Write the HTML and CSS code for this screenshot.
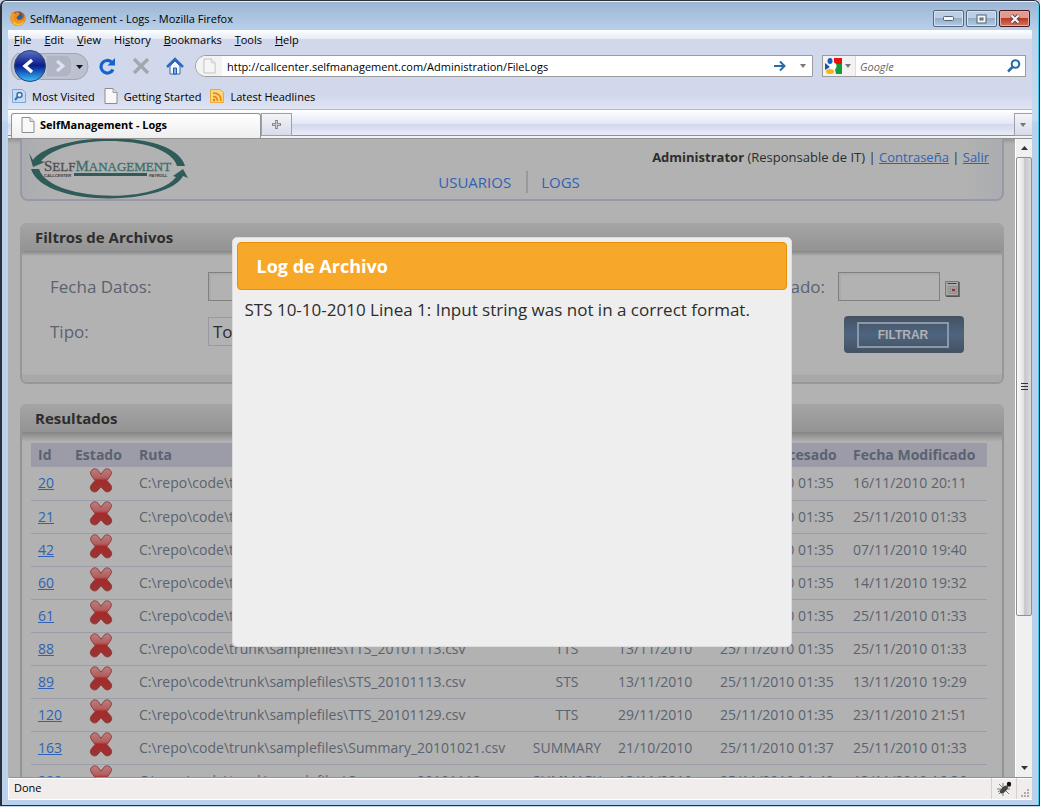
FILE: index.html
```html
<!DOCTYPE html>
<html lang="es">
<head>
<meta charset="utf-8">
<title>SelfManagement - Logs</title>
<link rel="stylesheet" href="styles.css">
</head>
<body>
<svg class="defs" aria-hidden="true">
  <defs>
    <linearGradient id="red" x1="0" y1="0" x2="0" y2="1"><stop offset="0" stop-color="#b98080"/><stop offset=".4" stop-color="#b45c5c"/><stop offset=".5" stop-color="#a62a2a"/><stop offset="1" stop-color="#983535"/></linearGradient>
    <linearGradient id="orb" x1="0" y1="0" x2="0" y2="1"><stop offset="0" stop-color="#5b71c4"/><stop offset=".48" stop-color="#0c1d87"/><stop offset=".55" stop-color="#0b2fa0"/><stop offset="1" stop-color="#38c4ff"/></linearGradient>
    <symbol id="cross" viewBox="0 0 24 26"><path d="M2.500 2.200C5-.2 8 .8 9.500 3.200L12 6.500l2.500-3.300C16 .8 19-.2 21.500 2.200c2 2 1.500 4.300 0 6.300L18.200 13l3.800 4.500c1.600 2 1.500 4.500-.3 6.200-2.300 2-5.200 1.300-6.900-.9L12 19.500l-2.800 3.300c-1.700 2.200-4.600 2.900-6.900.9-1.800-1.700-1.900-4.200-.3-6.200L5.800 13 2.500 8.500C1 6.500.5 4.200 2.500 2.200z" fill="url(#red)" stroke="#8f3b3b"/></symbol>
    <symbol id="page" viewBox="0 0 14 16"><path d="M1 .5h8l4 4v11H1z" fill="#f8f8f8" stroke="#8c8c8c"/><path d="M9 .5v4h4" fill="#ddd" stroke="#a0a0a0"/></symbol>
  </defs>
</svg>
<div class="window">
  <header class="titlebar">
    <svg class="firefox" width="16" height="17" viewBox="0 0 16 17"><circle cx="8" cy="8.500" r="7.500" fill="#d95a10"/><circle cx="8" cy="7" r="5" fill="#27629e"/><path d="M7 2c3 0 3 3 1 4s-2 3 1 4c2 0 3-1 4-3 0 5-3 7-6 6-3-.5-5-3-4-7z" fill="#ef8a1d"/><path d="M1 4c0-2 2-3 2-3v2l3 1-2 2c-1 4 3 7 8 5 2-1 2-4 2-6 2 4 1 9-4 10.500S0 13 .5 8z" fill="#f19a24"/><path d="M3 11c3 4 8 4 11 0-1 4-4 5-7 4.500S3 13 3 11z" fill="#f9c83c"/></svg>
    <span class="window-title">SelfManagement - Logs - Mozilla Firefox</span>
    <div class="controls">
      <button class="control" aria-label="Minimize"><svg width="11" height="6"><rect x=".5" y=".5" width="10" height="4" rx="1" fill="#f5f5f5" stroke="#53606f"/></svg></button>
      <button class="control" aria-label="Maximize"><svg width="11" height="10"><rect x="1" y="1" width="9" height="8" fill="#f5f5f5" stroke="#53606f"/><rect x="4" y="4" width="3" height="2" fill="#9fb4cb" stroke="#53606f"/></svg></button>
      <button class="control close" aria-label="Close"><svg width="12" height="10" viewBox="0 0 12 10"><path d="M2.500 1.500l7 7m0-7l-7 7" stroke="#5c4148" stroke-width="4"/><path d="M2.500 1.500l7 7m0-7l-7 7" stroke="#f5f5f5" stroke-width="2.200"/></svg></button>
    </div>
  </header>
  <div class="client">
    <div class="chrome">
      <nav class="menu" aria-label="Menu">
        <button><u>F</u>ile</button><button><u>E</u>dit</button><button><u>V</u>iew</button><button>Hi<u>s</u>tory</button><button><u>B</u>ookmarks</button><button><u>T</u>ools</button><button><u>H</u>elp</button>
      </nav>
      <div class="toolbar">
        <svg class="history" width="80" height="34" viewBox="0 0 80 34"><path d="M8 4.500h57a12 12 0 0 1 0 26H8C-1 26-1 8 8 4.500z" fill="#bcc1cf" stroke="#a0a4b3"/><path d="M36 6h19a7 7 0 0 1 7 7v8a7 7 0 0 1-7 7H36z" fill="#afb5c4" stroke="#c5cad6"/><path d="M47 12l6 5-6 5" fill="none" stroke="#dfe3ef" stroke-width="3"/><circle cx="20" cy="17" r="15.500" fill="url(#orb)" stroke="#2a4275"/><path d="M22 11l-7 6 7 6" fill="none" stroke="#fff" stroke-width="3.500"/><path d="M66 16h7l-3.500 4z" fill="#111"/></svg>
        <button class="tool" aria-label="Reload"><svg width="18" height="18" viewBox="0 0 18 18"><path d="M13.500 5A6.300 6.300 0 1 0 15 12.500" fill="none" stroke="#1762d0" stroke-width="3.200"/><path d="M17 1v7.500H9.500z" fill="#1762d0"/></svg></button>
        <button class="tool" aria-label="Stop"><svg width="18" height="18" viewBox="0 0 18 18"><path d="M2 2l14 14M16 2L2 16" stroke="#a5a7af" stroke-width="3.500"/></svg></button>
        <button class="tool" aria-label="Home"><svg width="18" height="18" viewBox="0 0 18 18"><path d="M4 9v8h10V9L9 4z" fill="#f4f8fd" stroke="#3566b4"/><path d="M1 10l8-8 8 8" fill="none" stroke="#2e69c4" stroke-width="2.500"/><path d="M7.500 11h3v6h-3z" fill="#76aef0" stroke="#245ba8"/></svg></button>
        <div class="url">
          <span class="favicon"><svg width="13" height="16" opacity=".5"><use href="#page"/></svg></span>
          <input type="text" aria-label="Address" value="http://callcenter.selfmanagement.com/Administration/FileLogs">
          <svg width="12" height="12" viewBox="0 0 12 12"><path d="M0 6h10M6 1.500L10.500 6 6 10.500" fill="none" stroke="#286ba8" stroke-width="2"/></svg>
          <svg width="7" height="4"><path d="M0 0h6L3 4z" fill="#777"/></svg>
        </div>
        <div class="search">
          <span class="engine"><svg width="17" height="16" viewBox="0 0 17 16"><path d="M9 0h8v6H9z" fill="#e8110d"/><path d="M9 6h8v10h-6z" fill="#139b3c"/><path d="M0 5l5 4-5 3z" fill="#1753ad"/><circle cx="8" cy="8" r="3.500" fill="#fff"/><ellipse cx="5" cy="3" rx="2.500" ry="3" fill="#1560bd"/><ellipse cx="5" cy="13.500" rx="4" ry="2.500" fill="#f6b417"/></svg><svg width="7" height="4"><path d="M0 0h6L3 4z" fill="#777"/></svg></span>
          <input type="text" aria-label="Search" placeholder="Google">
          <svg width="14" height="14" viewBox="0 0 14 14"><circle cx="8.500" cy="5" r="3.800" fill="#fff" stroke="#286ba8" stroke-width="2"/><path d="M5.500 8L1 12.500" stroke="#286ba8" stroke-width="2.500"/></svg>
        </div>
      </div>
      <div class="bookmarks">
        <a href="#"><svg width="14" height="16" viewBox="0 0 14 16"><path d="M.5 1.500h10l3 3v10H.5z" fill="#c4dcf5" stroke="#7ca8d7"/><circle cx="7.500" cy="7" r="2.500" fill="#e8f3fd" stroke="#3d6eae" stroke-width="1.500"/><path d="M5.500 9L3 12" stroke="#3d6eae" stroke-width="2"/></svg>Most Visited</a>
        <a href="#"><svg width="14" height="16"><use href="#page"/></svg>Getting Started</a>
        <a href="#"><svg width="14" height="16" viewBox="0 0 14 16"><path d="M.5 1.500h10l3 3v10H.5z" fill="#fbd77c" stroke="#e9a93b"/><path d="M3 5c5 0 8 3 8 8M3 8.500c3 0 4.500 1.500 4.500 4.500" fill="none" stroke="#e8820f" stroke-width="1.700"/><circle cx="4" cy="12" r="1.300" fill="#e8820f"/></svg>Latest Headlines</a>
      </div>
    </div>
    <div class="tabs">
      <button class="tab"><svg width="14" height="16"><use href="#page"/></svg>SelfManagement - Logs</button>
      <button class="new-tab" aria-label="New tab"><svg width="9" height="9"><path d="M4.500 0v9M0 4.500h9" stroke="#777" stroke-width="2.500"/><path d="M4.500 1v7M1 4.500h7" stroke="#ccc"/></svg></button>
      <button class="all-tabs" aria-label="All tabs"><svg width="7" height="4"><path d="M0 0h6L3 4z" fill="#777"/></svg></button>
    </div>
    <div class="view">
      <div class="page">
        <div class="site-head">
          <svg class="logo" width="160" height="60" viewBox="0 0 160 60">
            <path d="M4 21C22-6 145-12 156 27h-8C140-4 37-7 12 22l4 1-12 5-4-14z" fill="#2f5b59"/>
            <path d="M154 37C140 66 15 70 2 30h8C20 62 126 66 147 38l-3-1 10-7 5 9z" fill="#2f5b59"/>
            <text x="15" y="32" class="logo-name"><tspan class="logo-self">S<tspan class="cap">ELF</tspan></tspan>M<tspan class="cap">ANAGEMENT</tspan></text>
            <text x="15" y="38" class="logo-sub">CALLCENTER</text><path d="M45 34h73v3H45z" fill="#2f5b59"/><text x="120" y="38" class="logo-sub">PAYROLL</text>
          </svg>
          <nav class="site-nav" aria-label="Principal"><a href="#">USUARIOS</a><a href="#">LOGS</a></nav>
          <p class="user"><b>Administrator</b> (Responsable de IT) | <a href="#">Contraseña</a> | <a href="#">Salir</a></p>
        </div>
        <section class="panel">
          <h2>Filtros de Archivos</h2>
          <form class="filters">
            <label for="datos">Fecha Datos:</label><input id="datos" type="text">
            <label class="right-label" for="procesado">Fecha Procesado:</label>
            <div class="date"><input id="procesado" type="text"><svg width="15" height="16" viewBox="0 0 15 16"><path d="M.5.5h13v14H.5z" fill="#aaa" stroke="#777"/><path d="M14 1v14.500H1" fill="none" stroke="#555" stroke-width="1.500"/><path d="M2.500 2.500h9" stroke="#444"/><path d="M3 5.500h9v7H3zM3 8h9M3 10.500h9M5.500 5v8M8 5v8M10 5v8" fill="none" stroke="#8a8a8a" stroke-width=".7"/><path d="M7 8h3v2H7z" fill="#9c3030"/></svg></div>
            <label for="tipo">Tipo:</label><select id="tipo"><option>Todos</option></select>
            <button class="filter-button" type="button"><span>FILTRAR</span></button>
          </form>
        </section>
        <section class="panel results">
          <h2>Resultados</h2>
          <table>
            <colgroup><col class="c-id"><col class="c-state"><col><col class="c-type"><col class="c-date"><col class="c-proc"><col class="c-mod"></colgroup>
            <thead><tr><th>Id</th><th>Estado</th><th>Ruta</th><th>Tipo</th><th>Fecha</th><th>Fecha Procesado</th><th>Fecha Modificado</th></tr></thead>
            <tbody>
              <tr><td><a href="#">20</a></td><td><svg><use href="#cross"/></svg></td><td>C:\repo\code\trunk</td><td></td><td></td><td>25/11/2010 01:35</td><td>16/11/2010 20:11</td></tr>
              <tr><td><a href="#">21</a></td><td><svg><use href="#cross"/></svg></td><td>C:\repo\code\trunk</td><td></td><td></td><td>25/11/2010 01:35</td><td>25/11/2010 01:33</td></tr>
              <tr><td><a href="#">42</a></td><td><svg><use href="#cross"/></svg></td><td>C:\repo\code\trunk</td><td></td><td></td><td>25/11/2010 01:35</td><td>07/11/2010 19:40</td></tr>
              <tr><td><a href="#">60</a></td><td><svg><use href="#cross"/></svg></td><td>C:\repo\code\trunk</td><td></td><td></td><td>25/11/2010 01:35</td><td>14/11/2010 19:32</td></tr>
              <tr><td><a href="#">61</a></td><td><svg><use href="#cross"/></svg></td><td>C:\repo\code\trunk</td><td></td><td></td><td>25/11/2010 01:35</td><td>25/11/2010 01:33</td></tr>
              <tr><td><a href="#">88</a></td><td><svg><use href="#cross"/></svg></td><td>C:\repo\code\trunk\samplefiles\TTS_20101113.csv</td><td>TTS</td><td>13/11/2010</td><td>25/11/2010 01:35</td><td>25/11/2010 01:33</td></tr>
              <tr><td><a href="#">89</a></td><td><svg><use href="#cross"/></svg></td><td>C:\repo\code\trunk\samplefiles\STS_20101113.csv</td><td>STS</td><td>13/11/2010</td><td>25/11/2010 01:35</td><td>13/11/2010 19:29</td></tr>
              <tr><td><a href="#">120</a></td><td><svg><use href="#cross"/></svg></td><td>C:\repo\code\trunk\samplefiles\TTS_20101129.csv</td><td>TTS</td><td>29/11/2010</td><td>25/11/2010 01:35</td><td>23/11/2010 21:51</td></tr>
              <tr><td><a href="#">163</a></td><td><svg><use href="#cross"/></svg></td><td>C:\repo\code\trunk\samplefiles\Summary_20101021.csv</td><td>SUMMARY</td><td>21/10/2010</td><td>25/11/2010 01:37</td><td>25/11/2010 01:33</td></tr>
              <tr><td><a href="#">200</a></td><td><svg><use href="#cross"/></svg></td><td>C:\repo\code\trunk\samplefiles\Summary_20101113.csv</td><td>SUMMARY</td><td>13/11/2010</td><td>25/11/2010 01:40</td><td>13/11/2010 16:36</td></tr>
            </tbody>
          </table>
        </section>
        <div class="overlay">
          <div class="dialog" role="dialog" aria-labelledby="dialog-title">
            <h2 id="dialog-title">Log de Archivo</h2>
            <p>STS 10-10-2010 Linea 1: Input string was not in a correct format.</p>
          </div>
        </div>
      </div>
      <div class="scrollbar">
        <svg class="arrow" width="7" height="4"><path d="M0 4h7L3.500 0z" fill="#333"/></svg>
        <div class="thumb"><i></i><i></i><i></i></div>
        <div class="track"></div>
        <svg class="arrow" width="7" height="4"><path d="M0 0h7L3.500 4z" fill="#333"/></svg>
      </div>
    </div>
    <footer class="status">
      <span class="done">Done</span>
      <span class="bug"><svg width="16" height="16" viewBox="0 0 16 16"><path d="M3 3l10 10M1 8h13M7 2v13M3 13L13 3M2 11l3-2M11 6l4-1" stroke="#777"/><ellipse cx="8" cy="8.500" rx="2.300" ry="5" transform="rotate(45 8 8.500)" fill="#444"/><circle cx="13" cy="3" r="2.200" fill="#111"/></svg></span>
      <span class="grip"><svg width="9" height="9"><path d="M7 1h2M4 4h2M7 4h2M1 7h2M4 7h2M7 7h2" stroke="#b0aaa8" stroke-width="2"/></svg></span>
    </footer>
  </div>
</div>
</body>
</html>
```

FILE: styles.css
```css
* { box-sizing: border-box; }
body { margin: 0; background: #c5d5e8; font-family: "Open Sans", "Noto Sans", sans-serif; }
button, input, select { font: inherit; color: inherit; margin: 0; }
button { padding: 0; border: 0; background: none; }
svg { display: block; flex: none; }
.defs { position: absolute; width: 0; height: 0; }

.window {
  display: flex; flex-direction: column; height: calc(100vh - 1px);
  padding: 0 7px 0 6px; background: linear-gradient(#9ab4d3, #b9d1ea 30px, #c8dcf1 118px, #b9d1ea 122px);
  border: solid #2c2f39; border-width: 1px 1px 1px 2px; border-radius: 6px 6px 0 0;
  box-shadow: inset 0 1px #e9f2fb, inset -1px 0 #45c9ee; font-size: 11px; color: #000;
}
.titlebar { display: flex; align-items: center; height: 29px; padding: 6px 2px 0; gap: 4px; flex: none; }
.window-title { flex: 1; font-size: 11px; }
.controls { display: flex; gap: 2px; }
.control {
  display: flex; align-items: center; justify-content: center; width: 31px; height: 17px;
  border: 1px solid #56667d; border-radius: 2px; box-shadow: inset 0 0 0 1px #d5e2f0;
  background: linear-gradient(#bccfe4 45%, #93aecb 50%, #b4cce4);
}
.close { background: linear-gradient(#df9b90 45%, #b83a23 50%, #d2775f); border-color: #4b1721; box-shadow: inset 0 0 0 1px #e6aaa0; }

.client { flex: 1; min-height: 0; display: flex; flex-direction: column; margin-bottom: 5px; }
.chrome { background: linear-gradient(#fff, #e6ebf5 9px, #d2d8ec 9px, #d2d8ec 64px, #dfe4f4); border-bottom: 1px solid #b4b8ce; }
.menu { display: flex; gap: 13px; height: 19px; padding-left: 6px; }
.toolbar { display: flex; align-items: center; height: 34px; padding: 0 6px 0 2px; }
.tool { width: 34px; height: 24px; display: flex; justify-content: center; align-items: center; }
.url, .search { display: flex; align-items: center; height: 22px; background: #fff; border: 1px solid #9c9c9c; }
.url { flex: 1; margin-left: 3px; padding-right: 5px; gap: 14px; border-radius: 11px 0 0 11px; }
.favicon { display: flex; align-items: center; padding: 0 6px 0 7px; height: 20px; background: #f3f3f3; border-radius: 10px 0 0 10px; }
.url input, .search input { flex: 1; min-width: 0; height: 20px; padding: 0; border: 0; background: none; }
.url input { margin-left: -9px; }
.search { width: 204px; margin-left: 9px; padding-right: 4px; }
.engine { display: flex; align-items: center; gap: 3px; height: 20px; padding: 0 3px 0 2px; background: #f2f2f2; border-right: 1px solid #ddd; margin-right: 4px; }
.search input::placeholder { font-style: italic; color: #666; opacity: 1; }
.bookmarks { display: flex; gap: 9px; height: 26px; padding-left: 4px; align-items: center; }
.bookmarks a { display: flex; align-items: center; gap: 6px; color: #000; text-decoration: none; }
.tabs {
  display: flex; align-items: flex-end; height: 29px; padding-left: 3px; flex: none;
  background: linear-gradient(#fff, #e3e7f5 14px, #d2d8ec 14px, #e8ebf8 25px, #8e8e98 25px, #8e8e98 26px, #f4f4f4 26px, #f0f0f0 28px, #929292 28px);
}
.tab {
  display: flex; align-items: center; gap: 5px; width: 250px; height: 25px; margin-bottom: 1px; padding: 0 0 3px 9px; font-weight: 700;
  background: linear-gradient(#fff, #eee); border: 1px solid #929292; border-bottom: 0; border-radius: 3px 3px 0 0;
}
.new-tab, .all-tabs { display: flex; align-items: center; justify-content: center; height: 23px; margin-bottom: 3px; border: 1px solid #a0a0aa; background: linear-gradient(#f4f4f8, #d8dcea); }
.new-tab { width: 31px; }
.all-tabs { width: 18px; margin-left: auto; border-right: 0; }

.view { flex: 1; min-height: 0; display: flex; }
.page { position: relative; flex: 1; min-width: 0; overflow: hidden; padding: 0 11px 0 12px; background: linear-gradient(#979797, #b2b2b2 5px); color: #5b6270; font-size: 14px; }
.page a { color: #2f62b5; }
.site-head {
  display: grid; grid-template-columns: 1fr auto 1fr; height: 62px; padding: 0 13px 0 7px;
  border: solid #9898aa; border-width: 0 2px 2px; border-radius: 0 0 8px 8px;
  background: linear-gradient(90deg, #aaacb0, #b2b2b2 4% 96%, #aaacb0);
}
.site-nav { display: flex; align-self: end; margin-bottom: 6px; font-size: 15px; line-height: 22px; }
.site-nav a { text-decoration: none; }
.site-nav a + a { margin-left: 15px; padding-left: 13px; border-left: 2px solid #999; }
.user { margin: 8px 0 0; text-align: right; font-size: 13px; line-height: 20px; color: #2d2d2d; white-space: nowrap; }
.logo-name { font: 15px "Liberation Serif", serif; fill: #3e6e6c; stroke: #3e6e6c; stroke-width: .3px; }
.logo-self { fill: #4e4e4e; stroke: #4e4e4e; }
.cap { font-size: 13px; }
.logo-sub { font: italic bold 4px "Liberation Sans", sans-serif; fill: #3b3b3b; }

.panel { margin-top: 22px; padding: 0 2px 2px; border-radius: 7px; background: #979797; }
.panel h2 { margin: 0 -2px; padding-left: 15px; height: 28px; font-size: 15px; line-height: 28px; color: #2d2d2d; background: linear-gradient(#a5a5a5, #939393); border-radius: 7px 7px 0 0; }
.filters {
  display: grid; grid-template-columns: 158px 1fr auto 134px; align-items: center; grid-template-rows: 30px 37px; row-gap: 12px;
  padding: 20px 30px 32px 28px; border-radius: 4px; font-size: 17px;
  background: linear-gradient(#858585, transparent 5px), linear-gradient(transparent 123px, #a8a8a8 124px), #b2b2b2;
}
.filters input { width: 102px; height: 29px; background: #b2b2b2; border: 1px solid #808080; box-shadow: inset 2px 2px #aaa; }
.right-label { margin-right: 13px; }
.date { display: flex; align-items: center; gap: 5px; }
.date svg { margin-top: 6px; }
.filters select { width: 130px; height: 29px; padding: 0; background: #b2b2b2; border: 1px solid #9999a6; color: #2d2d2d; }
.filter-button { grid-column: 4; align-self: start; width: 120px; height: 37px; margin: 3px 0 0 6px; padding: 6px 15px 5px 13px; border-radius: 4px; background: linear-gradient(#445261, #4e6480 50%, #445261); color: #b2b2b2; font: bold 12px/22px "Liberation Sans", sans-serif; }
.filter-button span { display: block; border: 2px solid #8c98a8; }
.results { margin-top: 20px; padding: 0 0 20px; background: linear-gradient(#858585 28px, #b2b2b2 38px); border: solid #939393; border-width: 0 2px; }
table { width: calc(100% - 24px); margin: 11px 15px 0 9px; border-collapse: collapse; table-layout: fixed; }
.c-id { width: 37px; } .c-state { width: 64px; } .c-type { width: 88px; } .c-date { width: 102px; } .c-proc { width: 133px; } .c-mod { width: 141px; }
th, td { padding: 0 0 0 7px; text-align: left; white-space: nowrap; }
th { height: 24px; background: #9c9ca9; font-size: 14px; line-height: 24px; }
td { height: 33px; line-height: 32px; border-bottom: 1px solid #9c9ca9; }
td:nth-child(4) { padding: 0; text-align: center; }
td:nth-child(2) svg { width: 24px; height: 25px; margin: 0 0 6px 14px; }
.overlay { position: absolute; inset: 0; display: flex; justify-content: center; align-items: flex-start; padding-top: 98px; }
.dialog { width: 560px; min-height: 410px; padding: 4px; border: 1px solid #dcdcdc; border-radius: 5px; background: #eee; color: #2d2d2d; }
.dialog h2 { margin: 0; padding-left: 19px; font-size: 18px; line-height: 46px; color: #fff; background: #f8a829; border: 1px solid #e78f08; border-radius: 4px; }
.dialog p { margin: 7px 8px; font-size: 17px; line-height: 26px; white-space: nowrap; }

.scrollbar { width: 17px; display: flex; flex-direction: column; align-items: stretch; background: #f0f0f0; border-left: 1px solid #fff; }
.arrow { margin: 7px auto; }
.thumb { flex: 459; display: flex; flex-direction: column; justify-content: center; align-items: center; gap: 2px; border: 1px solid #909090; border-radius: 2px; background: linear-gradient(90deg, #fafafa, #e5e5e8 45%, #c6c6cc 55%, #dcdce0); }
.thumb i { width: 7px; height: 1px; background: #333; }
.track { flex: 144; }
.status { display: flex; height: 23px; flex: none; background: #f0edec; border: solid #fff; border-top-color: #929292; border-width: 1px 0 1px 1px; box-shadow: inset 0 1px #fff; line-height: 20px; }
.done { flex: 1; padding-left: 5px; }
.bug, .grip { display: flex; align-items: center; justify-content: center; border-left: 1px solid #d3d0ce; width: 25px; }
.grip { width: 16px; align-items: flex-end; padding-bottom: 1px; }
```
